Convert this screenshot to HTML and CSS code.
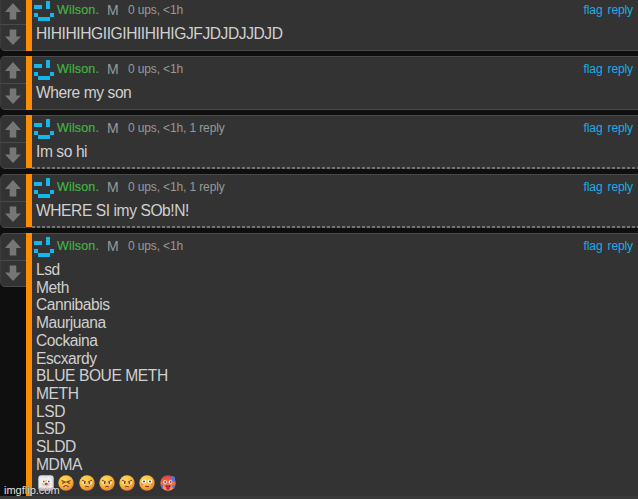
FILE: index.html
```
<!DOCTYPE html>
<html lang="en">
<head>
<meta charset="utf-8">
<title>Comments</title>
<link rel="stylesheet" href="styles.css">
</head>
<body>
<svg class="defs" width="0" height="0">
  <defs>
    <symbol id="up" viewBox="0 0 16 17"><path d="M8 0L16 9H11.3V16.5H4.7V9H0Z"/></symbol>
    <symbol id="down" viewBox="0 0 16 17"><path d="M8 16L0 7.5H4.7V.5H11.3V7.5H16Z"/></symbol>
    <symbol id="face" viewBox="0 0 20 20"><path d="M12 0h4v8h-4zM0 4h8v4H0zM0 12h4v4H0zM16 12h4v4h-4zM4 16h12v4H4z"/></symbol>
    <radialGradient id="skin" cx=".4" cy=".3" r=".75"><stop offset="0" stop-color="#ffd957"/><stop offset=".6" stop-color="#f8b53d"/><stop offset="1" stop-color="#df7634"/></radialGradient>
    <linearGradient id="hot" x2="0" y2="1"><stop offset="0" stop-color="#d8414c"/><stop offset=".45" stop-color="#ef6842"/><stop offset="1" stop-color="#f5a94d"/></linearGradient>
    <symbol id="angry" viewBox="0 0 16 16"><circle cx="8" cy="8" r="7.7" fill="url(#skin)"/><circle cx="5" cy="7.8" r="1.8" fill="#fff1d0"/><circle cx="11" cy="7.8" r="1.8" fill="#fff1d0"/><path d="M3 5.2l4 1.8M13 5.2L9 7M6 12q2-1.5 4 0" fill="none" stroke="#7b4528" stroke-width="1"/><circle cx="5.6" cy="8" r=".9" fill="#593022"/><circle cx="10.4" cy="8" r=".9" fill="#593022"/></symbol>
  </defs>
</svg>
<main class="thread">
  <article class="comment">
    <div class="votes"><div class="vote"><svg><use href="#up"/></svg></div><div class="vote"><svg><use href="#down"/></svg></div></div>
    <div class="body">
      <header class="meta"><svg class="avatar"><use href="#face"/></svg><span class="name">Wilson.</span><span class="rank">M</span><span class="stats">0 ups, &lt;1h</span><nav class="actions"><a>flag</a><a>reply</a></nav></header>
      <div class="text">HIHIHIHGIIGIHIIHIHIGJFJDJDJJDJD</div>
    </div>
  </article>
  <article class="comment">
    <div class="votes"><div class="vote"><svg><use href="#up"/></svg></div><div class="vote"><svg><use href="#down"/></svg></div></div>
    <div class="body">
      <header class="meta"><svg class="avatar"><use href="#face"/></svg><span class="name">Wilson.</span><span class="rank">M</span><span class="stats">0 ups, &lt;1h</span><nav class="actions"><a>flag</a><a>reply</a></nav></header>
      <div class="text">Where my son</div>
    </div>
  </article>
  <article class="comment replied">
    <div class="votes"><div class="vote"><svg><use href="#up"/></svg></div><div class="vote"><svg><use href="#down"/></svg></div></div>
    <div class="body">
      <header class="meta"><svg class="avatar"><use href="#face"/></svg><span class="name">Wilson.</span><span class="rank">M</span><span class="stats">0 ups, &lt;1h, 1 reply</span><nav class="actions"><a>flag</a><a>reply</a></nav></header>
      <div class="text">Im so hi</div>
    </div>
  </article>
  <article class="comment replied">
    <div class="votes"><div class="vote"><svg><use href="#up"/></svg></div><div class="vote"><svg><use href="#down"/></svg></div></div>
    <div class="body">
      <header class="meta"><svg class="avatar"><use href="#face"/></svg><span class="name">Wilson.</span><span class="rank">M</span><span class="stats">0 ups, &lt;1h, 1 reply</span><nav class="actions"><a>flag</a><a>reply</a></nav></header>
      <div class="text">WHERE SI imy SOb!N!</div>
    </div>
  </article>
  <article class="comment long">
    <div class="votes"><div class="vote"><svg><use href="#up"/></svg></div><div class="vote"><svg><use href="#down"/></svg></div></div>
    <div class="body">
      <header class="meta"><svg class="avatar"><use href="#face"/></svg><span class="name">Wilson.</span><span class="rank">M</span><span class="stats">0 ups, &lt;1h</span><nav class="actions"><a>flag</a><a>reply</a></nav></header>
      <div class="text">Lsd<br>Meth<br>Cannibabis<br>Maurjuana<br>Cockaina<br>Escxardy<br>BLUE BOUE METH<br>METH<br>LSD<br>LSD<br>SLDD<br>MDMA</div>
      <div class="emojis">
        <svg viewBox="0 0 16 16"><rect x=".3" y=".3" width="15.4" height="15.4" rx="3" fill="#dcd9e8"/><path d="M1 4L4 1l3 2 4-2 3 3v8l-3 3-3-2-4 2-3-3z" fill="#eeeaf2"/><path d="M4 5h8v5q-4 3-8 0z" fill="#e9c9a8"/><circle cx="5.5" cy="6.5" r="1.7" fill="#fff"/><circle cx="10.5" cy="6.5" r="1.7" fill="#fff"/><path d="M5 6.5h1.4M10 6.5h1.4M7 9h2.5" stroke="#57424d" stroke-width="1.3"/></svg>
        <svg viewBox="0 0 16 16"><circle cx="8" cy="8" r="7.7" fill="url(#skin)"/><path d="M3.5 5.5L7 7 4 8.5M12.5 5.5L9 7l3 1.5M5.5 12q2.5-3 5 0" fill="none" stroke="#7b3c23" stroke-width="1.2"/></svg>
        <svg><use href="#angry"/></svg>
        <svg><use href="#angry"/></svg>
        <svg><use href="#angry"/></svg>
        <svg viewBox="0 0 16 16"><circle cx="8" cy="8" r="7.7" fill="url(#skin)"/><circle cx="5" cy="6.5" r="2.1" fill="#fff"/><circle cx="11" cy="6.5" r="2.1" fill="#fff"/><circle cx="5" cy="6.5" r="1" fill="#623a29"/><circle cx="11" cy="6.5" r="1" fill="#623a29"/><path d="M6 11.5h4" stroke="#804426" stroke-width="1.2"/><path d="M2 9.5h2M12 9.5h2" stroke="#ef7963" stroke-width="1.5"/></svg>
        <svg viewBox="0 0 16 16"><circle cx="8" cy="8" r="7.7" fill="url(#hot)"/><path d="M12 1l3 1v4h-3zM1 9l2 1v4l-2-2zM13 9l2 2-1 3-2-2z" fill="#5078d4"/><circle cx="5" cy="7" r="1.8" fill="#fff"/><circle cx="10.5" cy="7" r="1.8" fill="#fff"/><path d="M4.4 7H6M10 7h1.5" stroke="#472435" stroke-width="1.3"/><path d="M5.5 10.5h5v1.5h-5z" fill="#69172c"/><rect x="6" y="11" width="4" height="4" rx="2" fill="#d91f55"/></svg>
      </div>
    </div>
  </article>
</main>
<div class="watermark">imgflip.com</div>
</body>
</html>
```
FILE: styles.css
```
* { box-sizing: border-box; }
html, body { height: 100%; }
body {
  margin: 0;
  overflow: hidden;
  background: #0f0f0f;
  font-family: "Liberation Sans", Arial, sans-serif;
  color: #d0d0d0;
}
.defs { position: absolute; }
.thread {
  display: flex;
  flex-direction: column;
  gap: 5px;
  margin-top: -3px;
  height: 502px;
  border-bottom: 3px solid #393939;
}
.comment { display: flex; height: 54px; flex: none; }
.comment.long { height: 263px; }
.votes { width: 26px; height: 54px; flex: none; }
.vote {
  height: 27px;
  display: flex;
  align-items: center;
  padding-left: 4px;
  background: #333;
  border-top: 1px solid #4a4a4a;
  border-left: 1px solid #3c3c3c;
}
.vote:first-child { border-top-left-radius: 5px; }
.vote:last-child { border-bottom: 1px solid #4a4a4a; border-bottom-left-radius: 5px; }
.vote svg { width: 16px; height: 17px; fill: #767676; }
.body {
  flex: 1;
  min-width: 0;
  background: #333;
  border-top: 1px solid #4a4a4a;
  border-bottom: 1px solid #4a4a4a;
  padding: 3px 5px 0 8px;
  position: relative;
}
.body::before {
  content: "";
  position: absolute;
  left: 0;
  top: -1px;
  bottom: -1px;
  width: 6px;
  background: #ff8c00;
}
.replied .body {
  border-bottom: 0;
  background: repeating-linear-gradient(90deg, #747474 0 3.4px, #333 3.4px 5px) 6px 100% / 100% 2px no-repeat #333;
}
.replied .body::before { bottom: 1px; }
.long .body { border-bottom: 0; }
.long .body::before { bottom: 0; }
.meta { display: flex; height: 20px; font-size: 12px; line-height: 19px; color: #999; white-space: nowrap; }
.avatar { width: 20px; height: 20px; fill: #14b7ea; flex: none; }
.name { width: 50px; margin-left: 3px; color: #43b443; font-size: 12.5px; letter-spacing: .15px; -webkit-text-stroke: .2px #43b443; }
.rank { width: 21px; font-size: 14px; }
.stats { letter-spacing: -.13px; }
.actions { display: flex; gap: 5px; margin-left: auto; color: #1aaee8; letter-spacing: -.1px; }
.text { margin: 4px 0 0 2px; font-size: 15.6px; line-height: 17.7px; letter-spacing: -.43px; white-space: nowrap; }
.emojis { display: flex; gap: 4.3px; padding: 2px 0 0 4px; }
.emojis svg { width: 16px; height: 16px; flex: none; }
.watermark {
  position: absolute;
  left: 4px;
  bottom: 2px;
  font-size: 11px;
  line-height: 13px;
  color: #e4e4e4;
  text-shadow: 0 0 1px #000;
}
```
